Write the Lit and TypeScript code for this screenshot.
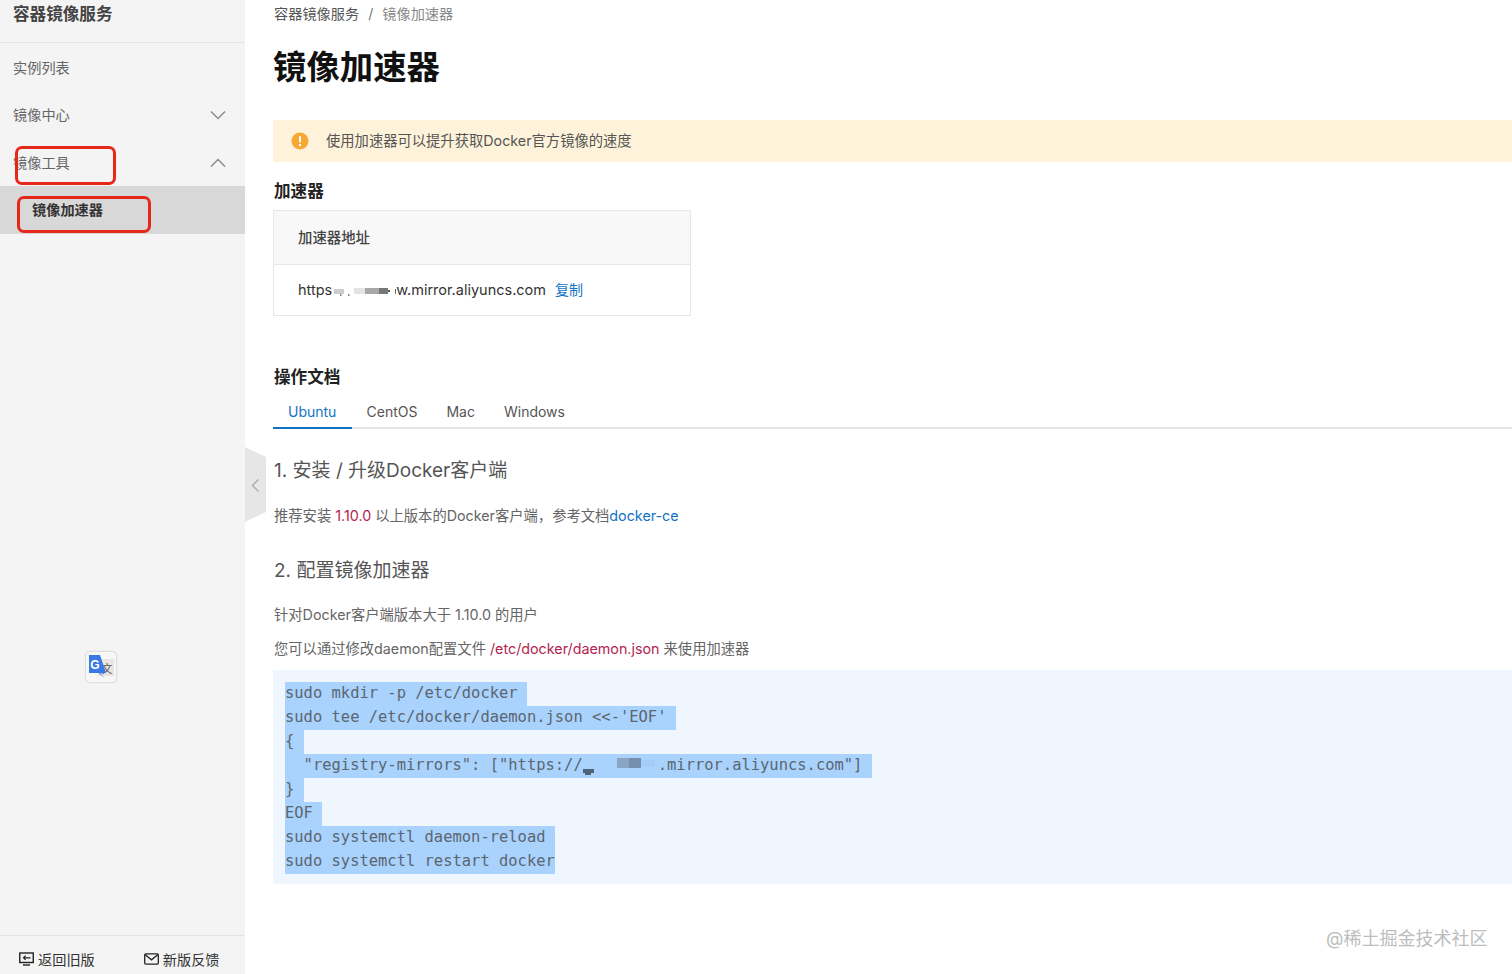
import { LitElement, html, css, svg } from "lit";
import { customElement } from "lit/decorators.js";

const chevron = (d: string) => html`<svg class="chev" width="16" height="10" viewBox="0 0 16 10"><path d="${d}" fill="none" stroke="#8c8c8c" stroke-width="1.5"/></svg>`;

const urlBlur = svg`<svg class="blur" width="64" height="14" viewBox="0 0 64 14">
  <defs><filter id="b1"><feGaussianBlur stdDeviation="0.6"/></filter></defs>
  <g filter="url(#b1)">
    <rect x="2" y="7" width="10" height="5" fill="#ccc"/>
    <rect x="8" y="12" width="1.5" height="2" fill="#888"/>
    <rect x="16" y="12" width="1.5" height="2" fill="#888"/>
    <rect x="22" y="6" width="12" height="6" fill="#e4e4e4"/>
    <rect x="33" y="6" width="14" height="6" fill="#a8a8a8"/>
    <rect x="47" y="6" width="9" height="6" fill="#777"/>
    <rect x="56" y="8" width="2" height="2" fill="#555"/>
    <rect x="63" y="7" width="1" height="5" fill="#666"/>
  </g></svg>`;

const codeBlur = svg`<svg class="blur code-blur" width="75" height="24" viewBox="0 0 75 24">
  <defs><filter id="b2"><feGaussianBlur stdDeviation="0.7"/></filter></defs>
  <g filter="url(#b2)">
    <rect x="-2" y="15" width="13" height="4" fill="#4f6478"/>
    <rect x="2" y="19" width="6" height="2" fill="#4f6478"/>
    <rect x="34" y="4" width="12" height="10" fill="#8aa4c4"/>
    <rect x="46" y="4" width="12" height="10" fill="#7590ae"/>
    <rect x="58" y="6" width="14" height="7" fill="#a4ccf6"/>
  </g></svg>`;

@customElement("app-root")
export class AppRoot extends LitElement {
  static styles = css`
    :host {
      display: flex;
      position: relative;
      width: 1512px;
      height: 974px;
      overflow: hidden;
      background: #fff;
      font-family: "Inter", "Noto Sans CJK SC", sans-serif;
      font-size: 14.3px;
      color: #555;
    }
    .side {
      position: relative;
      flex: 0 0 245px;
      display: flex;
      flex-direction: column;
      background: #f4f4f4;
      color: #666;
      font-size: 14.2px;
    }
    .brand {
      height: 43px;
      box-sizing: border-box;
      padding: 2px 13px 0;
      line-height: 24px;
      font-size: 16.6px;
      font-weight: 700;
      color: #444;
      border-bottom: 1px solid #e3e3e3;
    }
    .item {
      height: 48px;
      flex: none;
      display: flex;
      align-items: center;
      justify-content: space-between;
      padding: 0 19px 0 13px;
    }
    .item span { margin-bottom: 3px; }
    .item.first span { margin-bottom: 1px; }
    .item.active {
      background: #d8d8d8;
      color: #333;
      font-weight: 700;
      padding-left: 32px;
      margin-top: -1px;
    }
    .item.active span { margin-bottom: 2px; }
    .spacer { flex: 1; }
    .foot {
      height: 39px;
      flex: none;
      border-top: 1px solid #e2e2e2;
      display: flex;
      align-items: center;
      gap: 49px;
      padding: 0 0 0 19px;
      color: #333;
      box-sizing: border-box;
    }
    .foot div { display: flex; align-items: center; gap: 4px; padding-top: 7px; }
    .redbox {
      position: absolute;
      box-sizing: border-box;
      border: 3px solid #e6281b;
      border-radius: 7px;
    }
    .r1 { left: 15px; top: 146px; width: 101px; height: 39px; }
    .r2 { left: 17px; top: 196px; width: 134px; height: 37px; }
    .translate {
      position: absolute;
      left: 85px;
      top: 651px;
      width: 32px;
      height: 32px;
      box-sizing: border-box;
      border: 1px solid #dedede;
      border-radius: 5px;
      background: #f7f7f7;
      box-shadow: 0 0 2px #e5e5e5;
    }
    .handle { position: absolute; left: 245px; top: 447px; }
    .main {
      flex: 1;
      min-width: 0;
      padding-left: 28px;
      box-sizing: border-box;
    }
    .crumb {
      height: 28px;
      line-height: 28px;
      display: flex;
      color: #555;
      font-size: 14.2px;
      padding-left: 1px;
    }
    .crumb .sep { margin: 0 9px 0 9px; color: #777; }
    .crumb .cur { color: #888; }
    h1 {
      margin: 17px 0 0;
      font-size: 33.4px;
      line-height: 44px;
      font-weight: 700;
      color: #111;
    }
    .alert {
      margin: 31px 0 0 0;
      height: 42px;
      background: #fef3da;
      display: flex;
      align-items: center;
      gap: 17px;
      padding-left: 18px;
      color: #555;
    }
    .alert span { margin-bottom: 4px; }
    .title {
      font-size: 16.6px;
      font-weight: 700;
      color: #222;
      line-height: 24px;
      padding-left: 1px;
    }
    .t1 { margin-top: 17px; }
    .t2 { margin-top: 49px; }
    .table {
      margin-top: 7px;
      width: 418px;
      border: 1px solid #e6e6e6;
      box-sizing: border-box;
    }
    .thead {
      height: 54px;
      box-sizing: border-box;
      display: flex;
      align-items: center;
      padding: 0 0 3px 24px;
      background: #f8f8f8;
      border-bottom: 1px solid #e6e6e6;
      color: #444;
      font-weight: 500;
      font-size: 14.4px;
    }
    .trow {
      height: 50px;
      box-sizing: border-box;
      display: flex;
      align-items: center;
      padding: 0 0 2px 24px;
      color: #333;
      font-size: 14.5px;
    }
    .blur { flex: none; }
    .copy { color: #1273c5; margin: 0 0 1px 9px; font-size: 14px; }
    .tabs {
      margin-top: 11px;
      height: 29px;
      box-sizing: border-box;
      display: flex;
      border-bottom: 2px solid #e4e6e8;
      line-height: 23px;
      font-size: 14px;
    }
    .tab { padding: 0 14.5px; height: 29px; box-sizing: border-box; color: #555; }
    .tab.on {
      color: #1273c5;
      border-bottom: 2px solid #1273c5;
      padding: 0 0 0 15px;
      width: 79px;
    }
    h3 {
      margin: 0;
      padding-left: 1px;
      font-size: 19px;
      line-height: 28px;
      font-weight: 400;
      color: #555;
    }
    .h1st { margin-top: 28px; }
    .h2nd { margin-top: 30px; }
    p {
      margin: 0;
      padding-left: 1px;
      line-height: 22px;
      color: #666;
    }
    .p1 { margin-top: 20px; }
    .p2 { margin-top: 19px; }
    .p3 { margin-top: 12px; }
    .em { color: #b51e50; }
    .link { color: #1273c5; }
    pre {
      margin: 10px 0 0;
      height: 214px;
      box-sizing: border-box;
      padding: 12px;
      background: #eff6fe;
      font-family: "DejaVu Sans Mono", monospace;
      font-size: 15.46px;
      line-height: 22px;
      color: #5b6670;
    }
    .ln {
      display: block;
      width: fit-content;
      height: 24px;
      background: #a9d2fd;
      padding-right: 1ch;
      white-space: pre;
    }
    .ln.last { padding-right: 0; }
    .code-blur { vertical-align: top; }
    .mark {
      position: absolute;
      left: 1326px;
      top: 927px;
      font-size: 18px;
      line-height: 24px;
      color: #bdbdbd;
      white-space: nowrap;
    }
  `;

  render() {
    return html`
      <aside class="side">
        <div class="brand">容器镜像服务</div>
        <div class="item first"><span>实例列表</span></div>
        <div class="item"><span>镜像中心</span>${chevron("M1 1.5 L8 8.5 L15 1.5")}</div>
        <div class="item"><span>镜像工具</span>${chevron("M1 8.5 L8 1.5 L15 8.5")}</div>
        <div class="item active"><span>镜像加速器</span></div>
        <div class="spacer"></div>
        <div class="foot">
          <div>
            <svg width="15" height="14" viewBox="0 0 15 14">
              <rect x="0.75" y="1" width="13.5" height="9.5" fill="none" stroke="#222" stroke-width="1.4"/>
              <path d="M4 13 H11" stroke="#222" stroke-width="1.4"/>
              <path d="M11.5 5.8 H4.5 M6.6 3.7 L4.5 5.8 L6.6 7.9" fill="none" stroke="#222" stroke-width="1.2"/>
            </svg>
            <span>返回旧版</span>
          </div>
          <div>
            <svg width="15" height="12" viewBox="0 0 15 12">
              <rect x="0.7" y="0.9" width="13.6" height="10.2" rx="1" fill="none" stroke="#222" stroke-width="1.3"/>
              <path d="M1 1.5 L7.5 6.8 L14 1.5" fill="none" stroke="#222" stroke-width="1.3"/>
            </svg>
            <span>新版反馈</span>
          </div>
        </div>
        <div class="redbox r1"></div>
        <div class="redbox r2"></div>
        <div class="translate">
          <svg width="30" height="30" viewBox="0 0 30 30">
            <rect x="12" y="7" width="16" height="17" fill="#e9e6e2"/>
            <text x="21" y="21" font-size="11" text-anchor="middle" fill="#555" font-family="Noto Sans CJK SC">文</text>
            <path d="M3 3 H14 L20 21 H14 L18.5 26 L12.5 21 H3 Z" fill="#3a78e6"/>
            <text x="9" y="16.5" font-size="12" font-weight="700" text-anchor="middle" fill="#fff" font-family="Liberation Sans">G</text>
          </svg>
        </div>
      </aside>
      <svg class="handle" width="21" height="75" viewBox="0 0 21 75">
        <path d="M0 0 L21 10 V65 L0 75 Z" fill="#e6e6e6"/>
        <path d="M13.5 32.5 L7.5 38.5 L13.5 44.5" fill="none" stroke="#aeaeae" stroke-width="1.5"/>
      </svg>
      <main class="main">
        <div class="crumb"><span>容器镜像服务</span><span class="sep">/</span><span class="cur">镜像加速器</span></div>
        <h1>镜像加速器</h1>
        <div class="alert">
          <svg width="18" height="18" viewBox="0 0 18 18">
            <circle cx="9" cy="9" r="8.5" fill="#f7a733"/>
            <rect x="8" y="4" width="2" height="6.5" rx="1" fill="#fff"/>
            <circle cx="9" cy="13" r="1.2" fill="#fff"/>
          </svg>
          <span>使用加速器可以提升获取Docker官方镜像的速度</span>
        </div>
        <div class="title t1">加速器</div>
        <div class="table">
          <div class="thead">加速器地址</div>
          <div class="trow"><span>https</span>${urlBlur}<span>w.mirror.aliyuncs.com</span><span class="copy">复制</span></div>
        </div>
        <div class="title t2">操作文档</div>
        <div class="tabs">
          <div class="tab on">Ubuntu</div>
          <div class="tab">CentOS</div>
          <div class="tab">Mac</div>
          <div class="tab">Windows</div>
        </div>
        <h3 class="h1st">1. 安装 / 升级Docker客户端</h3>
        <p class="p1">推荐安装 <span class="em">1.10.0</span> 以上版本的Docker客户端，参考文档<span class="link">docker-ce</span></p>
        <h3 class="h2nd">2. 配置镜像加速器</h3>
        <p class="p2">针对Docker客户端版本大于 1.10.0 的用户</p>
        <p class="p3">您可以通过修改daemon配置文件 <span class="em">/etc/docker/daemon.json</span> 来使用加速器</p>
        <pre><span class="ln">sudo mkdir -p /etc/docker</span><span class="ln">sudo tee /etc/docker/daemon.json &lt;&lt;-'EOF'</span><span class="ln">{</span><span class="ln">  "registry-mirrors": ["https://${codeBlur}.mirror.aliyuncs.com"]</span><span class="ln">}</span><span class="ln">EOF</span><span class="ln">sudo systemctl daemon-reload</span><span class="ln last">sudo systemctl restart docker</span></pre>
      </main>
      <div class="mark">@稀土掘金技术社区</div>
    `;
  }
}
